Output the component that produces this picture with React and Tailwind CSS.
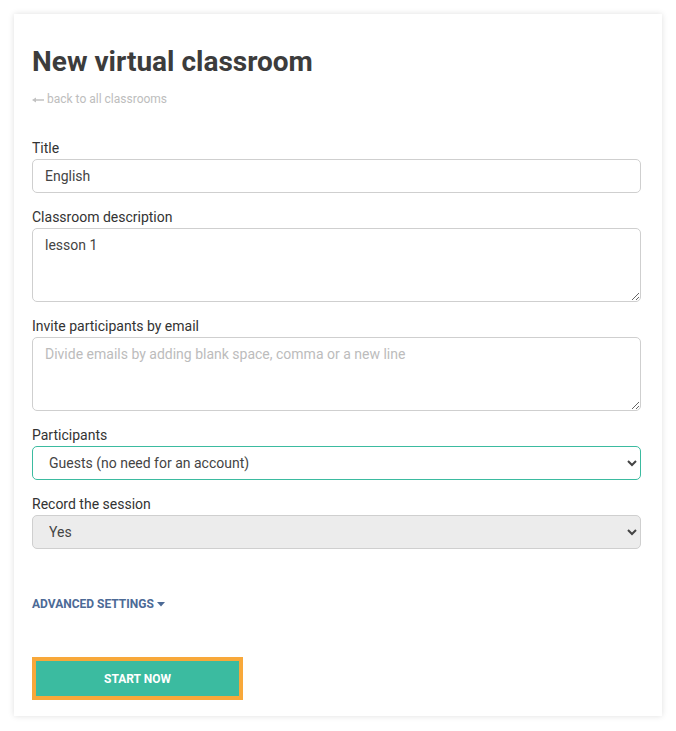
import React from 'react';

function Field({ label, children }) {
  return (
    <div className="flex flex-col">
      <label className="mb-[1px] text-[14px] leading-[20px] text-[#333]">{label}</label>
      {children}
    </div>
  );
}

export default function App() {
  return (
    <div className="min-h-[731px] bg-white p-[14px] font-['Roboto',sans-serif]">
      <div className="w-[648px] bg-white pl-[18px] pr-[21px] pt-[31px] pb-[16px] shadow-[0_0_6px_rgba(0,0,0,0.13)]">
        <h1 className="text-[28px] font-bold leading-[34px] text-[#3c3c3c]">New virtual classroom</h1>
        <a href="#" className="mt-[12px] flex items-center gap-[3px] text-[12px] leading-[16px] text-[#bdbdbd]">
          <svg width="12" height="6" viewBox="0 0 12 6" className="mt-[1px]">
            <path d="M0 3L4 0.5V2.2H12V3.8H4V5.5Z" fill="#c2c2c2" />
          </svg>
          back to all classrooms
        </a>

        {/* Formularz */}
        <div className="mt-[31px] flex flex-col gap-[14px]">
          <Field label="Title">
            <input
              defaultValue="English"
              className="h-[34px] rounded-[5px] border border-[#cfcfcf] px-[12px] text-[14px] text-[#444] outline-none"
            />
          </Field>
          <Field label="Classroom description">
            <textarea
              defaultValue="lesson 1"
              className="h-[74px] rounded-[5px] border border-[#cfcfcf] px-[12px] py-[6px] text-[14px] leading-[20px] text-[#444] outline-none"
            />
          </Field>
          <Field label="Invite participants by email">
            <textarea
              placeholder="Divide emails by adding blank space, comma or a new line"
              className="h-[74px] rounded-[5px] border border-[#cfcfcf] px-[12px] py-[6px] text-[14px] leading-[20px] text-[#444] outline-none placeholder:text-[#bcbcbc]"
            />
          </Field>
          <Field label="Participants">
            <select className="h-[34px] rounded-[5px] border border-[#3bbba0] bg-white px-[12px] text-[14px] text-[#444] outline-none">
              <option>Guests (no need for an account)</option>
            </select>
          </Field>
          <Field label="Record the session">
            <select className="h-[34px] rounded-[5px] border border-[#cfcfcf] bg-[#ececec] px-[12px] text-[14px] text-[#444] outline-none">
              <option>Yes</option>
            </select>
          </Field>
        </div>

        <button className="mt-[47px] flex items-center gap-[3px] text-[12px] font-bold uppercase leading-[16px] text-[#4c6a96]">
          Advanced settings
          <svg width="8" height="5" viewBox="0 0 8 5" className="mt-[1px]">
            <path d="M0 0h8L4 4.5z" fill="#4c6a96" />
          </svg>
        </button>

        <button className="mt-[45px] h-[43px] w-[211px] border-[4px] border-[#f8a83a] bg-[#3bbba0] text-[12px] font-bold uppercase text-white">
          Start now
        </button>
      </div>
    </div>
  );
}
